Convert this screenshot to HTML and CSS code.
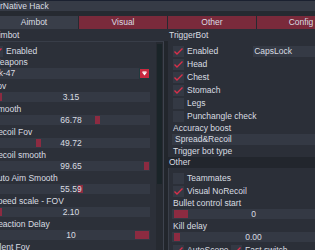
FILE: index.html
```html
<!DOCTYPE html>
<html lang="en">
<head>
  <meta charset="UTF-8">
  <title>Native Hack</title>
  <link rel="stylesheet" href="styles.css">
</head>
<body>
  <div class="window">
    <!-- title bar -->
    <div class="titlebar"><span class="title">rNative Hack</span></div>

    <!-- tabs -->
    <div class="tabs">
      <div class="tab active">Aimbot</div>
      <div class="tab">Visual</div>
      <div class="tab">Other</div>
      <div class="tab">Config</div>
    </div>

    <div class="columns">
      <!-- left column -->
      <div class="col-left">
        <div class="section-title">Aimbot</div>
        <div class="child">
          <div class="child-body">
            <div class="check"><span class="box"><svg viewBox="0 0 11 11"><polyline points="1.5,5.5 4,8 9.5,2.5"/></svg></span>Enabled</div>
            <div class="label">Weapons</div>
            <div class="combo"><span class="combo-text">Ak-47</span><span class="combo-btn"><svg viewBox="0 0 11 11"><rect x="3" y="3" width="5" height="1"/><polygon points="2.5,4 8.5,4 5.5,8"/></svg></span></div>
            <div class="label">Fov</div>
            <div class="slider"><span class="grab" style="left:5px"></span><span class="val">3.15</span></div>
            <div class="label">Smooth</div>
            <div class="slider"><span class="grab" style="left:103px"></span><span class="val">66.78</span></div>
            <div class="label">Recoil Fov</div>
            <div class="slider"><span class="grab" style="left:44px"></span><span class="val">49.72</span></div>
            <div class="label">Recoil smooth</div>
            <div class="slider"><span class="grab" style="left:152px"></span><span class="val">99.65</span></div>
            <div class="label">Auto Aim Smooth</div>
            <div class="slider"><span class="grab" style="left:86px"></span><span class="val">55.59</span></div>
            <div class="label">Speed scale - FOV</div>
            <div class="slider"><span class="grab" style="left:5px"></span><span class="val">2.10</span></div>
            <div class="label">Reaction Delay</div>
            <div class="slider"><span class="grab wide" style="left:143px"></span><span class="val">10</span></div>
            <div class="label">Silent Fov</div>
          </div>
          <div class="scrollbar"><div class="scroll-grab"></div></div>
        </div>
      </div>

      <!-- right column -->
      <div class="col-right">
        <div class="section-title">TriggerBot</div>
        <div class="right-body">
          <div class="check-row">
            <div class="check"><span class="box"><svg viewBox="0 0 11 11"><polyline points="1.5,5.5 4,8 9.5,2.5"/></svg></span>Enabled</div>
            <div class="keybind">CapsLock</div>
          </div>
          <div class="check"><span class="box"><svg viewBox="0 0 11 11"><polyline points="1.5,5.5 4,8 9.5,2.5"/></svg></span>Head</div>
          <div class="check"><span class="box"><svg viewBox="0 0 11 11"><polyline points="1.5,5.5 4,8 9.5,2.5"/></svg></span>Chest</div>
          <div class="check"><span class="box"><svg viewBox="0 0 11 11"><polyline points="1.5,5.5 4,8 9.5,2.5"/></svg></span>Stomach</div>
          <div class="check"><span class="box"></span>Legs</div>
          <div class="check"><span class="box"></span>Punchangle check</div>
          <div class="label">Accuracy boost</div>
          <div class="combo wide-combo"><span class="combo-text">Spread&amp;Recoil</span></div>
          <div class="label type-row">Trigger bot type</div>
        </div>

        <div class="sub-header">Other</div>
        <div class="sub-body">
          <div class="check"><span class="box"></span>Teammates</div>
          <div class="check"><span class="box"><svg viewBox="0 0 11 11"><polyline points="1.5,5.5 4,8 9.5,2.5"/></svg></span>Visual NoRecoil</div>
          <div class="label">Bullet control start</div>
          <div class="slider"><span class="grab wide" style="left:2px"></span><span class="val">0</span></div>
          <div class="label">Kill delay</div>
          <div class="slider"><span class="grab mid" style="left:2px"></span><span class="val">0.00</span></div>
          <div class="check-row">
            <div class="check"><span class="box"><svg viewBox="0 0 11 11"><polyline points="1.5,5.5 4,8 9.5,2.5"/></svg></span>AutoScope</div>
            <div class="check"><span class="box"><svg viewBox="0 0 11 11"><polyline points="1.5,5.5 4,8 9.5,2.5"/></svg></span>Fast switch</div>
          </div>
        </div>
      </div>
    </div>
  </div>
</body>
</html>
```

FILE: styles.css
```css
body {
  margin: 0;
  padding: 0;
  width: 315px;
  height: 250px;
  overflow: hidden;
  background: #1b2130;
  color: #dadde2;
  font-family: "Liberation Sans Narrow", "Liberation Sans", Arial, sans-serif;
  font-size: 8.5px;
}

/* main window */
.window {
  margin-top: 1px;
  margin-left: -10px;
  width: 355px;
  height: 260px;
  background: #2b2f38;
}

.titlebar {
  height: 10px;
  line-height: 10px;
  background: #363b46;
  padding-left: 10px;
}

/* tabs */
.tabs {
  display: flex;
  gap: 1px;
  padding-top: 5px;
  background: #262a31;
}

.tab {
  width: 88px;
  height: 13px;
  line-height: 13px;
  text-align: center;
  background: #7a2a3b;
}

.tab.active {
  background: #393e49;
}

.columns {
  display: flex;
}

.section-title {
  height: 12px;
  line-height: 12px;
}

/* left column */
.col-left {
  width: 174px;
}

.col-left .section-title {
  padding-left: 3px;
}

.child {
  display: flex;
  height: 220px;
  border-top: 1px solid #383d48;
  border-right: 1px solid #3e434e;
  background: #2c3039;
  box-shadow: 4px 0 0 #22262c;
}

.child-body {
  width: 158px;
  padding: 4px 6px 0 2px;
}

.scrollbar {
  width: 7px;
  background: #262a31;
}

.scroll-grab {
  height: 140px;
  margin: 2px 1px 0 1px;
  background: #1a2428;
}

/* widgets */
.label {
  height: 11px;
  line-height: 11px;
}

.check {
  display: flex;
  align-items: center;
  height: 11px;
  line-height: 11px;
}

.box {
  width: 11px;
  height: 11px;
  margin-right: 3px;
  background: #343944;
  flex-shrink: 0;
}

.box svg {
  display: block;
  width: 11px;
  height: 11px;
  fill: none;
  stroke: #d8304a;
  stroke-width: 1.4;
}

.combo {
  display: flex;
  justify-content: space-between;
  height: 11px;
  line-height: 11px;
  margin-bottom: 2px;
  background: #343944;
}

.combo-text {
  padding-left: 1px;
}

.combo-btn {
  width: 9px;
  height: 9px;
  border: 1px solid #203a3e;
  background: #c8283f;
}

.combo-btn svg {
  display: block;
  width: 9px;
  height: 9px;
  fill: #ffffff;
}

.slider {
  position: relative;
  height: 10px;
  line-height: 10px;
  margin-bottom: 2px;
  background: #343944;
  text-align: center;
}

.grab {
  position: absolute;
  top: 1px;
  width: 5px;
  height: 8px;
  background: #8c2b41;
}

.grab.wide {
  width: 14px;
}

.grab.mid {
  width: 6px;
}

.val {
  position: relative;
}

/* right column */
.col-right {
  flex: 1;
  margin-left: 4px;
}

.col-right .section-title {
  padding-left: 1px;
}

.right-body {
  padding: 4px 0 0 5px;
  width: 162px;
}

.right-body .check,
.sub-body .check {
  height: 13px;
}

.check-row {
  display: flex;
  height: 13px;
}

.check-row .check {
  height: 13px;
}

.keybind {
  height: 11px;
  line-height: 11px;
  margin-top: 1px;
  margin-left: 35px;
  flex: 1;
  padding-left: 1px;
  background: #353a45;
}

.wide-combo {
  margin-left: -1px;
  margin-bottom: 1px;
}

.wide-combo .combo-text {
  padding-left: 3px;
}

.sub-header {
  height: 11px;
  line-height: 11px;
  padding-left: 1px;
  background: #22262d;
}

.sub-body {
  border-left: 1px solid #3a3f49;
  padding: 4px 0 0 4px;
  width: 162px;
}

.sub-body .slider {
  margin-left: -1px;
}

.sub-body .check-row .check {
  width: 58px;
}
```
